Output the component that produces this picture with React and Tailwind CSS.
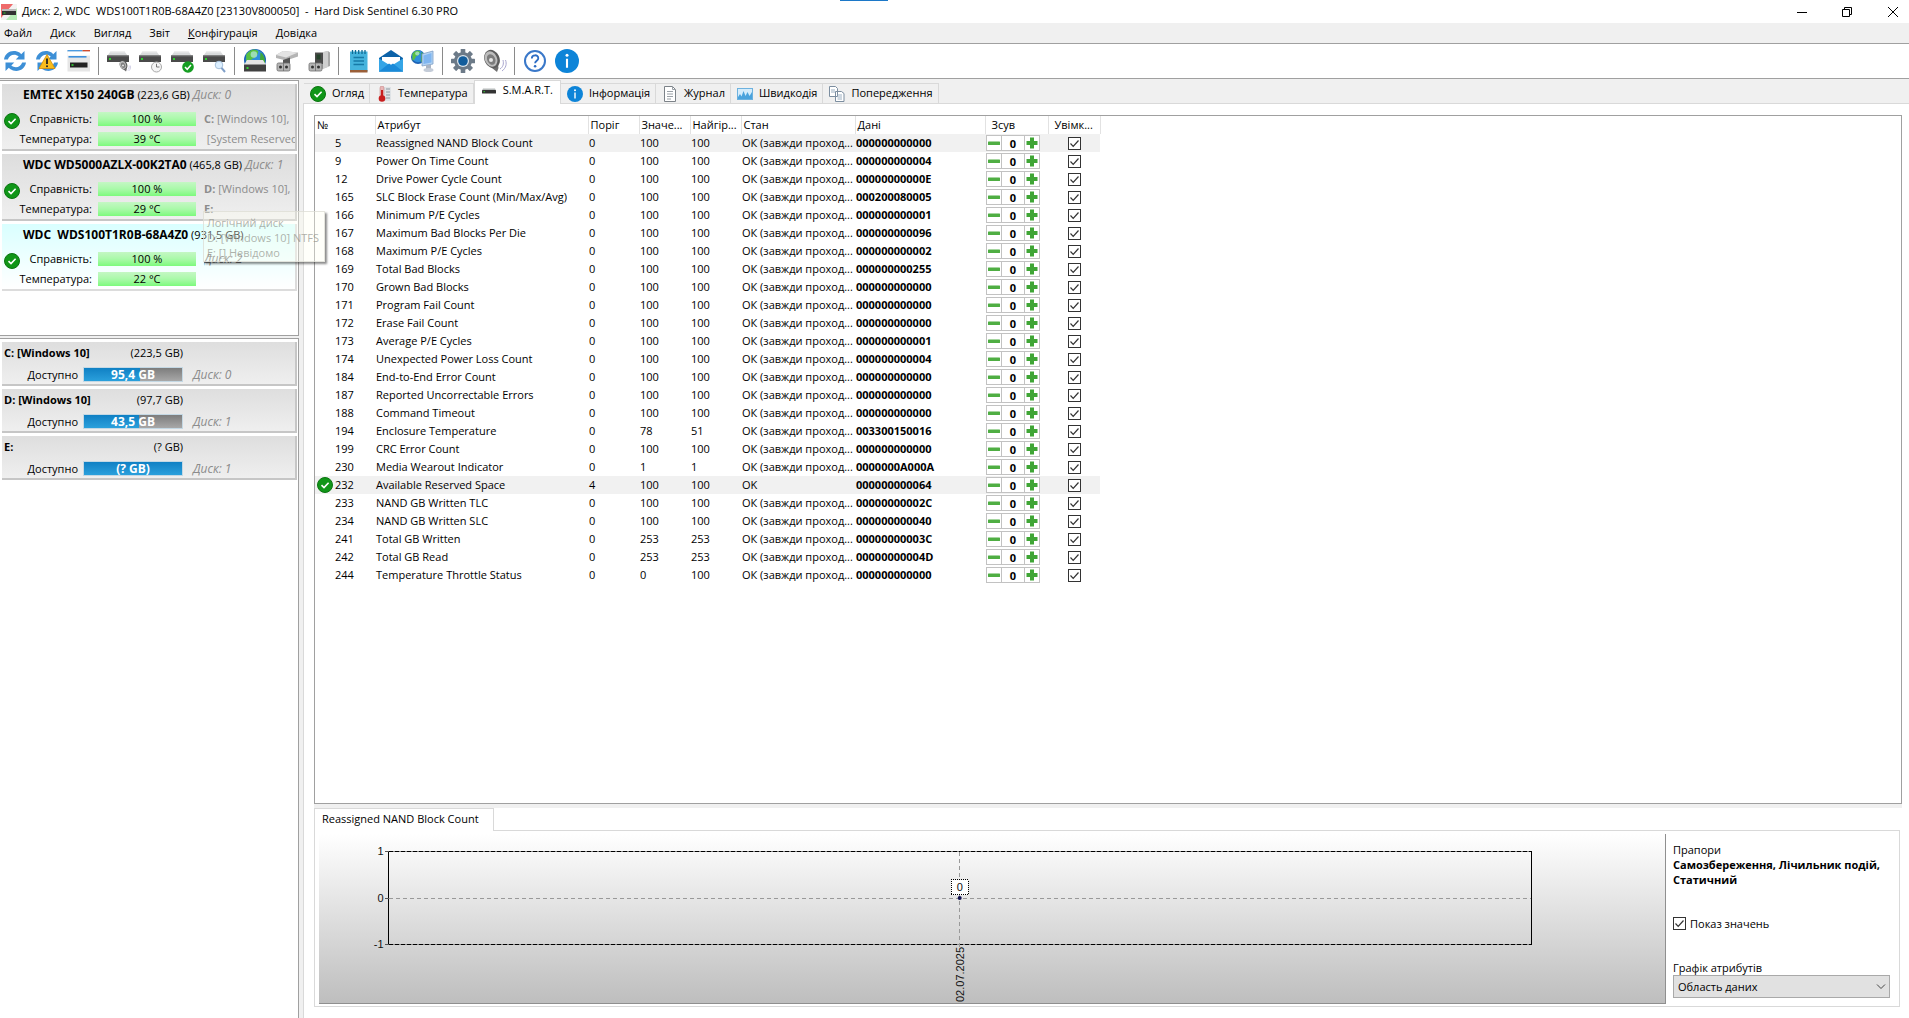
import React from "react";

const rows = [
  ["5", "Reassigned NAND Block Count", "0", "100", "100", "000000000000"],
  ["9", "Power On Time Count", "0", "100", "100", "000000000004"],
  ["12", "Drive Power Cycle Count", "0", "100", "100", "00000000000E"],
  ["165", "SLC Block Erase Count (Min/Max/Avg)", "0", "100", "100", "000200080005"],
  ["166", "Minimum P/E Cycles", "0", "100", "100", "000000000001"],
  ["167", "Maximum Bad Blocks Per Die", "0", "100", "100", "000000000096"],
  ["168", "Maximum P/E Cycles", "0", "100", "100", "000000000002"],
  ["169", "Total Bad Blocks", "0", "100", "100", "000000000255"],
  ["170", "Grown Bad Blocks", "0", "100", "100", "000000000000"],
  ["171", "Program Fail Count", "0", "100", "100", "000000000000"],
  ["172", "Erase Fail Count", "0", "100", "100", "000000000000"],
  ["173", "Average P/E Cycles", "0", "100", "100", "000000000001"],
  ["174", "Unexpected Power Loss Count", "0", "100", "100", "000000000004"],
  ["184", "End-to-End Error Count", "0", "100", "100", "000000000000"],
  ["187", "Reported Uncorrectable Errors", "0", "100", "100", "000000000000"],
  ["188", "Command Timeout", "0", "100", "100", "000000000000"],
  ["194", "Enclosure Temperature", "0", "78", "51", "003300150016"],
  ["199", "CRC Error Count", "0", "100", "100", "000000000000"],
  ["230", "Media Wearout Indicator", "0", "1", "1", "0000000A000A"],
  ["232", "Available Reserved Space", "4", "100", "100", "000000000064"],
  ["233", "NAND GB Written TLC", "0", "100", "100", "00000000002C"],
  ["234", "NAND GB Written SLC", "0", "100", "100", "000000000040"],
  ["241", "Total GB Written", "0", "253", "253", "00000000003C"],
  ["242", "Total GB Read", "0", "253", "253", "00000000004D"],
  ["244", "Temperature Throttle Status", "0", "0", "100", "000000000000"],
];

const Svg = ({ children, className = "size-6", box = "0 0 24 24" }) => (
  <svg viewBox={box} className={className + " shrink-0"} aria-hidden="true" fill="none">
    {children}
  </svg>
);

/* ---------- shared icon pieces ---------- */
const CheckBadge = ({ className = "size-4" }) => (
  <Svg className={className} box="0 0 16 16">
    <circle cx="8" cy="8" r="7.5" fill="#109618" stroke="#0b7511" />
    <path d="M4.5 8.2 7 10.6 11.6 5.8" stroke="#fff" strokeWidth="1.6" />
  </Svg>
);

const InfoIcon = ({ className = "size-4" }) => (
  <Svg className={className} box="0 0 16 16">
    <circle cx="8" cy="8" r="8" fill="#0d84d8" />
    <rect x="7.3" y="6.5" width="1.4" height="6" fill="#fff" />
    <circle cx="8" cy="4.2" r="1" fill="#fff" />
  </Svg>
);

const Drive = () => (
  <>
    <path d="M4 2h13l4 5H0z" fill="#d9dbdc" />
    <path d="M4 2h13l1 1.500H3z" fill="#eeeeee" />
    <rect x="0" y="6.500" width="22" height="6.500" fill="#4a4a4a" />
    <rect x="0" y="6.500" width="22" height="1" fill="#6e6e6e" />
    <rect x="2" y="9" width="2" height="2" fill="#2fd02f" />
  </>
);

const Arrows = () => (
  <>
    <path d="M1 10.500C2 4 8 .8 14 2.600c2 .6 3.200 1.500 4.200 2.600L21.500 2v8.500h-8.800l3-3C12 4.500 6.500 5.500 4.800 10.500z" fill="#3d8fd6" />
    <path d="M23 13.500c-1 6.500-7 9.700-13 7.900-2-.6-3.200-1.500-4.200-2.600L2.500 22v-8.500h8.800l-3 3c3.700 3 9.200 2 10.900-3z" fill="#3d8fd6" />
  </>
);

const Globe = ({ cx, cy, r }) => (
  <>
    <circle cx={cx} cy={cy} r={r} fill="#1d62b5" />
    <circle cx={cx} cy={cy - r * 0.1} r={r * 0.85} fill="#2f8fdc" />
    <path
      d={`M${cx - r * 0.8} ${cy - r * 0.5}q${r * 0.6} ${-r * 0.7} ${r * 1.1} ${-r * 0.3}q${-r * 0.1} ${r * 0.6} ${-r * 0.6} ${r * 0.7}q${-r * 0.1} ${r * 0.5} ${-r * 0.5} ${r * 0.6}z`}
      fill="#58c043"
    />
    <path
      d={`M${cx + r * 0.5} ${cy - r * 0.7}q${r * 0.5} ${r * 0.3} ${r * 0.4} ${r * 1.2}l${-r * 0.5} ${r * 0.2}z`}
      fill="#3fa83a"
    />
    <circle cx={cx - r * 0.1} cy={cy - r * 0.5} r={r * 0.3} fill="#c9efff" opacity="0.6" />
  </>
);

const Speaker = () => (
  <>
    <path d="M9 19l5 4 1.500-4-2-12z" fill="#6f6f6f" />
    <ellipse cx="9" cy="10" rx="7.500" ry="9.500" transform="rotate(-25 9 10)" fill="#5d5d5d" />
    <ellipse cx="8" cy="10" rx="6" ry="8" transform="rotate(-25 8 10)" fill="#bdbdbd" />
    <ellipse cx="8" cy="10.500" rx="4" ry="5.500" transform="rotate(-25 8 10)" fill="#7d7d7d" />
    <circle cx="8" cy="11" r="2" fill="#e6e6e6" />
    <path d="M17 20c3-2 4-5 3-9M19 22c4-3 5-7 3.500-11" stroke="#a9a6cf" strokeWidth="1" />
  </>
);

const Plug = () => (
  <>
    <rect x="2" y="14" width="13" height="8" rx="1.500" fill="#b5b5b5" stroke="#6d6d6d" strokeWidth=".8" />
    <path d="M8.500 14v8" stroke="#6d6d6d" strokeWidth=".8" />
    <circle cx="5.500" cy="18" r="1.500" fill="#333" />
    <circle cx="11.500" cy="18" r="1.500" fill="#333" />
  </>
);

const toolGroups = [
  [
    ["Оновити", <Svg><Arrows /></Svg>],
    ["Оновити все", <Svg><Arrows /><path d="M12 5.500 20 19.500H4z" fill="#f9bd1c" stroke="#d48d08" strokeWidth=".8" /><path d="M12 9.500v5.500" stroke="#222" strokeWidth="1.800" /><circle cx="12" cy="17.200" r="1" fill="#222" /></Svg>],
    ["Панель диска", <Svg>
      <rect x=".5" y="1" width="22.500" height="21.500" fill="#e6e6e6" />
      <rect x=".5" y="1" width="15" height="1.600" fill="#4c9be0" /><rect x="15.500" y="1" width="7.500" height="1.600" fill="#d04b2c" />
      <rect x=".5" y="2.600" width="22.500" height="4" fill="#fff" />
      <rect x="1.500" y="7" width="18" height="1.600" fill="#3c8fdc" />
      <rect x="3" y="13.500" width="17.500" height="5" fill="#222" /><rect x="4.500" y="15.200" width="2" height="1.600" fill="#35d435" />
    </Svg>],
  ],
  [
    ["Тест звуку", <Svg><Drive /><g transform="translate(12 11) scale(.5)"><Speaker /></g></Svg>],
    ["Розклад", <Svg><Drive /><circle cx="17.500" cy="18" r="5" fill="#f5f5f5" stroke="#a8a8a8" /><path d="M17.500 14.800V18h3" stroke="#777" /></Svg>],
    ["Перевірка", <Svg><Drive /><circle cx="17" cy="18" r="5.800" fill="#159e22" /><path d="M14 18l2.200 2.300L20 16" stroke="#fff" strokeWidth="1.500" /></Svg>],
    ["Пошук", <Svg><Drive /><circle cx="16" cy="16" r="3.800" fill="#dcefff" stroke="#a6bfd9" /><path d="M18.500 18.800 22 23" stroke="#7f9fc8" strokeWidth="2" /></Svg>],
  ],
  [
    ["Мережа", <Svg><Globe cx={12} cy={11} r={11} /><path d="M4 11h16l3 5H1z" fill="#e4e4e4" /><rect x="1" y="15.500" width="22" height="7" fill="#414141" /><rect x="3.500" y="18" width="2" height="2" fill="#35d435" /></Svg>],
    ["Роз'єм", <Svg><path d="M1 6 8 2l15 1.500v4L11 11.500 1 9z" fill="#b4b4b4" /><path d="M1 6 8 2l15 1.500-12 5z" fill="#e3e3e3" /><path d="M8 11l7-2.500v6H8z" fill="#555" /><Plug /></Svg>],
    ["Під'єднання", <Svg><path d="M8 3h9l4-1 2 1.500V17l-8 3V12H8z" fill="#a8a8a8" /><rect x="8" y="4" width="8" height="11" fill="#4a4a4a" /><rect x="9.500" y="5.500" width="4" height="5" fill="#26422b" /><path d="M16 3l5-1v16l-5 2z" fill="#cfcfcf" /><Plug /></Svg>],
  ],
  [
    ["Звіт", <Svg><rect x="3" y="2.500" width="17.500" height="20" fill="#45b4dd" /><rect x="3" y="21" width="17.500" height="2.500" fill="#9a5f38" /><path d="M5.500 1v4M8.500 1v4M11.700 1v4M15 1v4M18 1v4" stroke="#0f6b94" strokeWidth="1.300" /><path d="M6.500 8.500h10.500M6.500 12h10.500M6.500 15.500h10.500" stroke="#167aa7" strokeWidth="1.500" /></Svg>],
    ["Пошта", <Svg><path d="M0 9 12 1l12 8v13.500H0z" fill="#0c62a8" /><path d="M3 8h18v8H3z" fill="#fff" /><path d="M0 9.500 12 17l12-7.500v13H0z" fill="#35a5e6" /><path d="M0 22.500 10 14.500l2 1.300 2-1.300 10 8z" fill="#1a8ad8" /></Svg>],
    ["Віддалений доступ", <Svg><Globe cx={7} cy={8} r={7} /><path d="M11 5 22 2v13l-11 2z" fill="#b5d4f3" stroke="#7f9fc6" strokeWidth=".8" /><path d="M12.500 6.500 20.500 4v9.500l-8 1.500z" fill="#7fb5f0" /><path d="M15 16h5v4h-5z" fill="#a9b4c4" /><ellipse cx="17.500" cy="21" rx="5" ry="2" fill="#c4ccd8" /></Svg>],
  ],
  [
    ["Налаштування", <Svg>
      <g fill="#6c7a88">
        <circle cx="12" cy="12" r="9" />
        {[0, 45, 90, 135].map((a) => <rect key={a} x="9.700" y="0" width="4.600" height="24" rx=".6" transform={`rotate(${a} 12 12)`} />)}
      </g>
      <circle cx="12" cy="12" r="6" fill="#dfe7ee" /><circle cx="12" cy="12" r="4.800" fill="#125d9c" />
    </Svg>],
    ["Звук", <Svg><Speaker /></Svg>],
  ],
  [
    ["Довідка", <Svg><circle cx="12" cy="12" r="10" fill="#fff" stroke="#3a78c9" strokeWidth="2" /><path d="M8.800 9.500c0-4.300 6.600-4.200 6.500-.3 0 2.500-3.200 2.500-3.200 5.100" stroke="#2c6cc4" strokeWidth="1.800" /><circle cx="12.100" cy="17.200" r="1.300" fill="#2c6cc4" /></Svg>],
    ["Про програму", <InfoIcon className="size-6" />],
  ],
];

const tabs = [
  ["Огляд", <CheckBadge />],
  ["Температура", <Svg className="size-4" box="0 0 16 16"><rect x="7" y="1" width="8" height="14" fill="#dfe3e6" /><path d="M10 3h4M10 6h4M10 9h4M10 12h4" stroke="#8f989f" /><rect x="4" y="0" width="4" height="11" rx="2" fill="#e9b6b6" stroke="#b77" strokeWidth=".5" /><rect x="5" y="4" width="2" height="8" fill="#c81e1e" /><circle cx="6" cy="12.500" r="3.300" fill="#c81e1e" /></Svg>],
  ["S.M.A.R.T.", <Svg className="size-4" box="0 0 16 16"><path d="M2 5.500h12l1 2H1z" fill="#b8bcbc" /><rect x="1" y="7" width="14" height="3.500" rx=".5" fill="#333" /><rect x="2.500" y="8.200" width="1.500" height="1" fill="#3c3" /></Svg>],
  ["Інформація", <InfoIcon />],
  ["Журнал", <Svg className="size-4" box="0 0 16 16"><path d="M2.500.5h8l3 3v12h-11z" fill="#fff" stroke="#7c8288" /><path d="M10.500.5v3h3M5 5.500h6M5 8h6M5 10.500h6M5 13h4" stroke="#9aa0a6" /></Svg>],
  ["Швидкодія", <Svg className="size-4" box="0 0 16 16"><rect x=".5" y="2.500" width="15" height="11" fill="#d5ecfb" stroke="#6db2df" /><path d="M1 11l2-3 1.500 2.500L6.500 5l2 5 2-4 2 4 2.500-4v7H1z" fill="#4aa3dd" /></Svg>],
  ["Попередження", <Svg className="size-4" box="0 0 16 16"><path d="M.5.5h6l2 2v8h-8zM6.500 5.500h6l2.500 2v8H6.500z" fill="#fff" stroke="#7c8ea0" /><path d="M2 4h4M2 6h4M8.500 9h4.500M8.500 11h4.500M8.500 13h4.500" stroke="#9db0c2" /></Svg>],
];

const barGreen = "bg-linear-to-b from-[#c4f7c4] via-[#a9f9a9] to-[#7cfa7c]";

function DiskCard({ name, size, disk, temp, vols, selected }) {
  return (
    <article
      className={
        "h-[67px] border-r-2 border-b-2 " +
        (selected ? "bg-linear-to-b from-[#d9ffff] to-white border-[#dcdcdc]" : "bg-linear-to-b from-[#dddddd] to-[#efefef] border-[#c6c6c6]")
      }
    >
      <h2 className="h-[25px] pl-[21px] pt-[3px] text-[11px] leading-4 whitespace-pre overflow-hidden">
        <span className="font-bold text-[12px]">{name}</span> {size} {disk && <i className="text-[12px] text-[#8c8c8c]">{disk}</i>}
      </h2>
      <div className="grid grid-cols-[16px_72px_104px_minmax(0,1fr)] grid-rows-[20px_20px] items-center pl-[2px] text-[11px] leading-4">
        <CheckBadge className="size-4 self-end" />
        <span className="text-right">Справність:</span>
        <span className={"ml-[6px] h-[14px] leading-[14px] text-center " + barGreen}>100 %</span>
        <span className="ml-2 whitespace-pre overflow-hidden text-[#8c8c8c]">{vols[0]}</span>
        <span />
        <span className="-ml-4 text-right">Температура:</span>
        <span className={"ml-[6px] h-[14px] leading-[14px] text-center " + barGreen}>{temp} °C</span>
        <span className="ml-2 whitespace-pre overflow-hidden text-[#8c8c8c]">{vols[1]}</span>
      </div>
    </article>
  );
}

function VolumeCard({ name, size, free, disk, pct }) {
  return (
    <article className="h-11 border-r-2 border-b-2 border-[#c6c6c6] bg-linear-to-b from-[#dedede] to-[#efefef] text-[11px] leading-4">
      <div className="flex justify-between w-[181px] pl-[2px] pt-[3px] h-6">
        <b>{name}</b>
        <span>{size}</span>
      </div>
      <div className="flex items-center h-[17px]">
        <span className="w-[76px] text-right">Доступно</span>
        <span className="relative ml-[5px] w-[100px] h-[15px] border border-[#c4d8e4] bg-linear-to-b from-[#7d7d7d] to-[#a8a8a8]">
          <span className="block h-full bg-linear-to-b from-[#0f80c4] to-[#2aa0dc]" style={{ width: pct + "%" }} />
          <b className="absolute inset-0 text-center text-[12px] leading-[13px] text-white">{free}</b>
        </span>
        <i className="ml-[10px] text-[12px] text-[#8c8c8c]">{disk}</i>
      </div>
    </article>
  );
}

function Tick({ id, label }) {
  return (
    <span className="relative inline-flex size-[13px]">
      <input id={id} type="checkbox" defaultChecked aria-label={label} className="peer appearance-none size-[13px] border border-[#333] bg-white" />
      <svg viewBox="0 0 13 13" fill="none" className="absolute inset-0 pointer-events-none invisible peer-checked:visible">
        <path d="M2.500 6.500 5.200 9.300 10.500 3.500" stroke="#333" strokeWidth="1.200" />
      </svg>
    </span>
  );
}

const th = "h-[18px] border-r border-[#e2e2e2] pl-[2px] font-normal text-left whitespace-nowrap overflow-hidden";
const td = "pl-px whitespace-nowrap overflow-hidden";

function SmartTable() {
  return (
    <table className="table-fixed w-[785px] border-collapse text-[11px] leading-[18px]">
      <colgroup>
        <col className="w-[60px]" />
        <col className="w-[213px]" />
        <col className="w-[51px]" />
        <col className="w-[51px]" />
        <col className="w-[51px]" />
        <col className="w-[114px]" />
        <col className="w-[130px]" />
        <col className="w-[63px]" />
        <col className="w-[52px]" />
      </colgroup>
      <thead>
        <tr>
          {["№", "Атрибут", "Поріг", "Значе...", "Найгір...", "Стан", "Дані"].map((h) => (
            <th key={h} className={th}>{h}</th>
          ))}
          <th className={th}><span className="pl-1">Зсув</span></th>
          <th className={th}><span className="pl-1">Увімк...</span></th>
        </tr>
      </thead>
      <tbody>
        {rows.map(([id, name, thr, val, worst, data]) => (
          <tr key={id} className={id === "5" || id === "232" ? "h-[18px] bg-[#f1f1f1]" : "h-[18px]"}>
            <td className="p-0">
              <span className="flex items-center h-[18px] pl-[2px]">
                <span className="w-[18px] flex">{id === "232" && <CheckBadge />}</span>
                {id}
              </span>
            </td>
            <td className={td}>{name}</td>
            <td className={td}>{thr}</td>
            <td className={td}>{val}</td>
            <td className={td}>{worst}</td>
            <td className={td}>{id === "232" ? "OK" : "ОК (завжди проход..."}</td>
            <td className={td + " font-bold"}>{data}</td>
            <td className="p-0">
              <span className="flex ml-px w-[54px] h-4 border border-[#c2c2c2] bg-white">
                <button aria-label="Зменшити" className="w-[15px] flex items-center justify-center border-r border-[#c2c2c2]">
                  <svg viewBox="0 0 12 12" className="size-3"><rect x="0" y="4.500" width="12" height="3.500" rx=".5" fill="#4fae43" /></svg>
                </button>
                <b className="flex-1 text-center leading-[15px]">0</b>
                <button aria-label="Збільшити" className="w-[15px] flex items-center justify-center border-l border-[#c2c2c2]">
                  <svg viewBox="0 0 12 12" className="size-3"><path d="M4 .5h4V4h3.500v4H8v3.500H4V8H.5V4H4z" fill="#3fa535" /></svg>
                </button>
              </span>
            </td>
            <td className="p-0">
              <span className="flex pl-5"><Tick label={"Увімкнено " + id} /></span>
            </td>
          </tr>
        ))}
      </tbody>
    </table>
  );
}

function Chart() {
  const L = "5.2%", R = "90.1%", M = "47.6%";
  const txt = { fontSize: 11, fontFamily: '"Liberation Sans", sans-serif', fill: "#111" };
  return (
    <div className="flex-1 min-w-0 h-[170px] border-r border-b border-[#8f8f8f] bg-linear-to-b from-white to-[#bebebe]">
      <svg className="w-full h-full block" shapeRendering="crispEdges">
        <line x1={L} x2={R} y1="17.5" y2="17.5" stroke="#888" />
        <line x1={L} x2={R} y1="17.5" y2="17.5" stroke="#000" strokeDasharray="4 2" />
        <line x1={L} x2={R} y1="64.5" y2="64.5" stroke="#999" strokeDasharray="4 3" />
        <line x1={L} x2={R} y1="110.5" y2="110.5" stroke="#888" />
        <line x1={L} x2={R} y1="110.5" y2="110.5" stroke="#000" strokeDasharray="4 2" />
        <line x1={L} x2={L} y1="17" y2="111" stroke="#000" />
        <line x1={R} x2={R} y1="17" y2="111" stroke="#000" />
        <line x1={M} x2={M} y1="18" y2="115" stroke="#999" strokeDasharray="4 3" />
        <line x1="4.900%" x2={L} y1="17.5" y2="17.5" stroke="#555" />
        <line x1="4.900%" x2={L} y1="64.5" y2="64.5" stroke="#555" />
        <line x1="4.900%" x2={L} y1="110.5" y2="110.5" stroke="#555" />
        <g textAnchor="end" style={txt}>
          <text x="4.800%" y="21">1</text>
          <text x="4.800%" y="68">0</text>
          <text x="4.800%" y="114">-1</text>
        </g>
        <svg x={M} y="0" width="1" height="170" overflow="visible">
          <rect x="-8.500" y="45.500" width="17" height="15" fill="#fff" stroke="#000" strokeDasharray="1 1" />
          <text x="0" y="57" textAnchor="middle" style={txt}>0</text>
          <circle cx="0" cy="64" r="2" fill="#101050" shapeRendering="auto" />
          <text transform="translate(4 168) rotate(-90)" style={txt}>02.07.2025</text>
        </svg>
      </svg>
    </div>
  );
}

export default function App() {
  return (
    <div className="flex flex-col h-screen min-h-[720px] overflow-hidden bg-[#f0f0f0] text-black font-['Open_Sans','Noto_Sans',sans-serif] text-[11px]">
      <header className="relative flex items-center h-[23px] shrink-0 bg-white">
        <span className="absolute top-0 left-[44%] w-12 h-px bg-[#1c78c8]" />
        <Svg className="size-4 ml-px" box="0 0 16 16">
          <rect width="16" height="16" fill="#f3f3f3" />
          <path d="M0 0h12L0 14z" fill="#ee6a6a" />
          <path d="M16 4v12H5z" fill="#b6ecb6" />
          <rect x="1" y="5" width="14" height="2" fill="#bbb" />
          <rect x="1" y="7" width="14" height="4" fill="#333" />
          <rect x="2.500" y="8.500" width="2" height="1" fill="#3c3" />
        </Svg>
        <h1 className="pl-[5px] whitespace-pre">{"Диск: 2, WDC  WDS100T1R0B-68A4Z0 [23130V800050]  -  Hard Disk Sentinel 6.30 PRO"}</h1>
        <div className="ml-auto flex h-full">
          <button aria-label="Згорнути" className="w-[45px] flex items-center justify-center"><svg viewBox="0 0 10 10" className="size-[10px]"><path d="M0 5.500h10" stroke="#000" /></svg></button>
          <button aria-label="Відновити" className="w-[45px] flex items-center justify-center"><svg viewBox="0 0 10 10" className="size-[10px]" fill="none" stroke="#000"><path d="M.5 2.500h7v7h-7zM2.500 2.500v-2h7v7h-2" /></svg></button>
          <button aria-label="Закрити" className="w-10 flex items-center justify-end pr-[11px]"><svg viewBox="0 0 10 10" className="size-[10px]"><path d="M0 0 10 10M10 0 0 10" stroke="#000" /></svg></button>
        </div>
      </header>

      <nav className="flex items-center h-5 shrink-0 pl-1 gap-[18px]">
        {["Файл", "Диск", "Вигляд", "Звіт"].map((m) => <button key={m}>{m}</button>)}
        <button><u>К</u>онфігурація</button>
        <button>Довідка</button>
      </nav>

      <div role="toolbar" className="flex items-center h-9 shrink-0 bg-white border-y border-[#a0a0a0]">
        {toolGroups.map((g, i) => (
          <div key={i} className="flex items-center">
            {i > 0 && <span className="w-px h-7 ml-[2px] mr-[5px] bg-[#8a8a8a]" />}
            {g.map(([label, icon]) => (
              <button key={label} title={label} aria-label={label} className="w-8 h-8 flex items-center justify-center pr-[2px]">{icon}</button>
            ))}
          </div>
        ))}
      </div>

      <div className="flex flex-1 min-h-0 pt-px">
        <aside className="relative w-[299px] shrink-0 flex flex-col gap-[2px]">
          <section className="h-[256px] bg-white border-t border-r border-b border-[#a0a0a0] pl-[2px] pr-px pt-[3px] flex flex-col gap-[3px]">
            <DiskCard name="EMTEC X150 240GB" size="(223,6 GB)" disk="Диск: 0" temp="39" vols={[<><b>C:</b> [Windows 10],</>, " [System Reserved]"]} />
            <DiskCard name="WDC WD5000AZLX-00K2TA0" size="(465,8 GB)" disk="Диск: 1" temp="29" vols={[<><b>D:</b> [Windows 10],</>, <b>E:</b>]} />
            <DiskCard name="WDC  WDS100T1R0B-68A4Z0" size="(931,5 GB)" temp="22" vols={[<i className="text-[12px] text-[#777]">Диск: 2</i>, ""]} selected />
          </section>
          <section className="flex-1 bg-white border-t border-r border-[#a0a0a0] pl-[2px] pr-px pt-[3px] flex flex-col gap-[3px]">
            <VolumeCard name="C: [Windows 10]" size="(223,5 GB)" free="95,4 GB" disk="Диск: 0" pct={57} />
            <VolumeCard name="D: [Windows 10]" size="(97,7 GB)" free="43,5 GB" disk="Диск: 1" pct={56} />
            <VolumeCard name="E:" size="(? GB)" free="(? GB)" disk="Диск: 1" pct={100} />
          </section>
          <div role="tooltip" className="absolute z-10 left-[203px] top-[131px] w-[122px] h-[51px] px-[3px] py-[3px] border border-[#dadad2]/70 bg-[#fffff0]/35 leading-[15px] text-[#8f8f88]/70 whitespace-nowrap shadow-[2px_2px_2px_rgba(0,0,0,0.45)]">
            Логічний диск<br />D: [Windows 10] NTFS<br />E: [] Невідомо
          </div>
        </aside>

        <main className="flex-1 min-w-0 flex flex-col pl-1">
          <div role="tablist" className="flex items-end h-[23px] shrink-0 pl-px relative z-1">
            {tabs.map(([label, icon]) => {
              const on = label === "S.M.A.R.T.";
              return (
                <button
                  key={label}
                  role="tab"
                  aria-selected={on}
                  className={
                    "flex items-center whitespace-nowrap border-[#d9d9d9] pl-[6px] gap-[6px] " +
                    (on ? "h-6 -mb-px bg-white border-x border-t pb-1 pr-[7px]" : "h-5 border-t border-r bg-[#f0f0f0] pr-[5px]")
                  }
                >
                  {icon}
                  {label}
                </button>
              );
            })}
          </div>
          <div className="flex-1 min-h-0 flex flex-col bg-white border-t border-l border-[#d9d9d9] pl-[10px] pt-[11px] pb-[11px]">
            <div className="flex-1 min-h-0 mr-[7px] border border-[#a0a0a0] overflow-hidden">
              <SmartTable />
            </div>
            <div className="h-1 mr-[7px] shrink-0 bg-[#f0f0f0]" />
            <div className="shrink-0 mr-[9px]">
              <button role="tab" aria-selected="true" className="relative z-1 block h-[23px] -mb-px pb-[2px] bg-white border-x border-t border-[#d9d9d9] pl-[7px] pr-[14px]">
                Reassigned NAND Block Count
              </button>
              <div className="flex border border-[#d9d9d9] pl-1 pt-[3px] pb-[2px]">
                <Chart />
                <div className="w-[233px] shrink-0 pl-[7px] pr-[9px] pt-[8px] flex flex-col leading-[15px]">
                  <span>Прапори</span>
                  <b>Самозбереження, Лічильник подій, Статичний</b>
                  <label className="mt-[29px] flex items-center gap-1"><Tick id="show-values" label="Показ значень" />Показ значень</label>
                  <label htmlFor="attr-chart" className="mt-auto">Графік атрибутів</label>
                  <span className="relative mb-[6px]">
                    <select id="attr-chart" className="appearance-none w-full h-[23px] pl-1 border border-[#a9a9a9] bg-[#e1e1e1] rounded-none">
                      <option>Область даних</option>
                    </select>
                    <svg viewBox="0 0 10 6" fill="none" className="absolute right-1 top-[9px] w-[10px] h-[6px] pointer-events-none"><path d="M1 .5 5 4.500 9 .5" stroke="#444" /></svg>
                  </span>
                </div>
              </div>
            </div>
          </div>
        </main>
      </div>
    </div>
  );
}
